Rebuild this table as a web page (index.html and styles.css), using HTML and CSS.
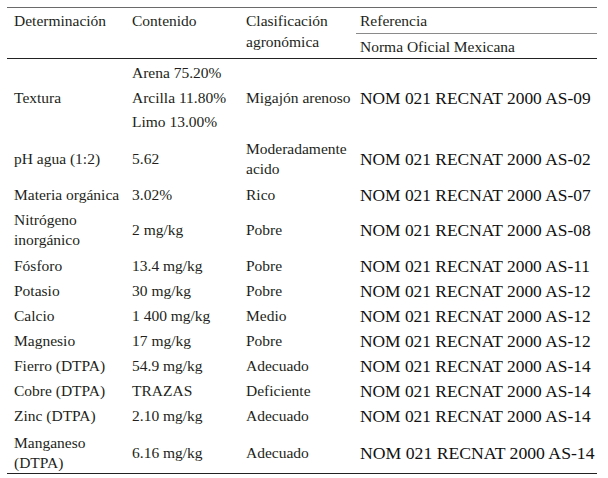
FILE: index.html
```html
<!DOCTYPE html>
<html lang="es">
<head>
<meta charset="utf-8">
<title>Análisis de suelo</title>
<link rel="stylesheet" href="styles.css">
</head>
<body>
<table class="soil">
  <colgroup>
    <col class="c1"><col class="c2"><col class="c3"><col class="c4">
  </colgroup>
  <thead>
    <tr>
      <th rowspan="2" class="p1">Determinación</th>
      <th rowspan="2">Contenido</th>
      <th rowspan="2">Clasificación<br>agronómica</th>
      <th class="ref">Referencia</th>
    </tr>
    <tr class="sub">
      <th class="ref">Norma Oficial Mexicana</th>
    </tr>
  </thead>
  <tbody>
    <tr class="first">
      <td class="p1">Textura</td>
      <td class="multi"><div>Arena 75.20%</div><div>Arcilla 11.80%</div><div>Limo 13.00%</div></td>
      <td>Migajón arenoso</td>
      <td class="nom">NOM 021 RECNAT 2000 AS-09</td>
    </tr>
    <tr class="two">
      <td class="p1">pH agua (1:2)</td>
      <td>5.62</td>
      <td>Moderadamente<br>acido</td>
      <td class="nom">NOM 021 RECNAT 2000 AS-02</td>
    </tr>
    <tr>
      <td class="p1">Materia orgánica</td>
      <td>3.02%</td>
      <td>Rico</td>
      <td class="nom">NOM 021 RECNAT 2000 AS-07</td>
    </tr>
    <tr class="two">
      <td class="p1">Nitrógeno<br>inorgánico</td>
      <td>2 mg/kg</td>
      <td>Pobre</td>
      <td class="nom">NOM 021 RECNAT 2000 AS-08</td>
    </tr>
    <tr>
      <td class="p1">Fósforo</td>
      <td>13.4 mg/kg</td>
      <td>Pobre</td>
      <td class="nom">NOM 021 RECNAT 2000 AS-11</td>
    </tr>
    <tr>
      <td class="p1">Potasio</td>
      <td>30 mg/kg</td>
      <td>Pobre</td>
      <td class="nom">NOM 021 RECNAT 2000 AS-12</td>
    </tr>
    <tr>
      <td class="p1">Calcio</td>
      <td>1 400 mg/kg</td>
      <td>Medio</td>
      <td class="nom">NOM 021 RECNAT 2000 AS-12</td>
    </tr>
    <tr>
      <td class="p1">Magnesio</td>
      <td>17 mg/kg</td>
      <td>Pobre</td>
      <td class="nom">NOM 021 RECNAT 2000 AS-12</td>
    </tr>
    <tr>
      <td class="p1">Fierro (DTPA)</td>
      <td>54.9 mg/kg</td>
      <td>Adecuado</td>
      <td class="nom">NOM 021 RECNAT 2000 AS-14</td>
    </tr>
    <tr>
      <td class="p1">Cobre (DTPA)</td>
      <td>TRAZAS</td>
      <td>Deficiente</td>
      <td class="nom">NOM 021 RECNAT 2000 AS-14</td>
    </tr>
    <tr>
      <td class="p1">Zinc (DTPA)</td>
      <td>2.10 mg/kg</td>
      <td>Adecuado</td>
      <td class="nom">NOM 021 RECNAT 2000 AS-14</td>
    </tr>
    <tr class="last">
      <td class="p1">Manganeso<br>(DTPA)</td>
      <td>6.16 mg/kg</td>
      <td>Adecuado</td>
      <td class="nom big">NOM 021 RECNAT 2000 AS-14</td>
    </tr>
  </tbody>
</table>
</body>
</html>
```

FILE: styles.css
```css
html, body {
  margin: 0;
  padding: 0;
  background: #ffffff;
}

body {
  padding: 7px 0 0 7px;
  color: #231f20;
}

.soil {
  width: 590px;
  border-collapse: collapse;
  table-layout: fixed;
  border-top: 1px solid #6a6a6a;
  border-bottom: 1px solid #222222;
}

.soil th,
.soil td {
  font-family: "Liberation Serif", serif;
  font-size: 15.5px;
}

.c1 { width: 119px; }
.c2 { width: 114px; }
.c3 { width: 116px; }
.c4 { width: 241px; }

.soil thead {
  border-bottom: 1px solid #222222;
}

.soil th {
  font-weight: normal;
  text-align: left;
  vertical-align: top;
  line-height: 21px;
  padding: 2px 4px 2px 6px;
}

.soil th.ref {
  padding-left: 4px;
}

.soil .sub th {
  border-top: 1px solid #8a8a8a;
  padding-top: 2px;
  padding-bottom: 1px;
}

.soil td {
  vertical-align: middle;
  line-height: 20px;
  padding: 3px 4px 2px 6px;
  white-space: nowrap;
}

.soil .two td {
  padding-bottom: 3px;
}

.soil .p1 {
  padding-left: 7px;
}

.soil td.multi {
  padding-top: 2px;
  padding-bottom: 1px;
}

.soil td.multi div {
  line-height: 24.5px;
}

.soil .last td {
  padding-top: 5px;
  padding-bottom: 0;
}

.soil td.nom {
  font-size: 17.4px;
  color: #111111;
  padding-left: 4px;
}

.soil td.nom.big {
  font-size: 17.7px;
}
```
